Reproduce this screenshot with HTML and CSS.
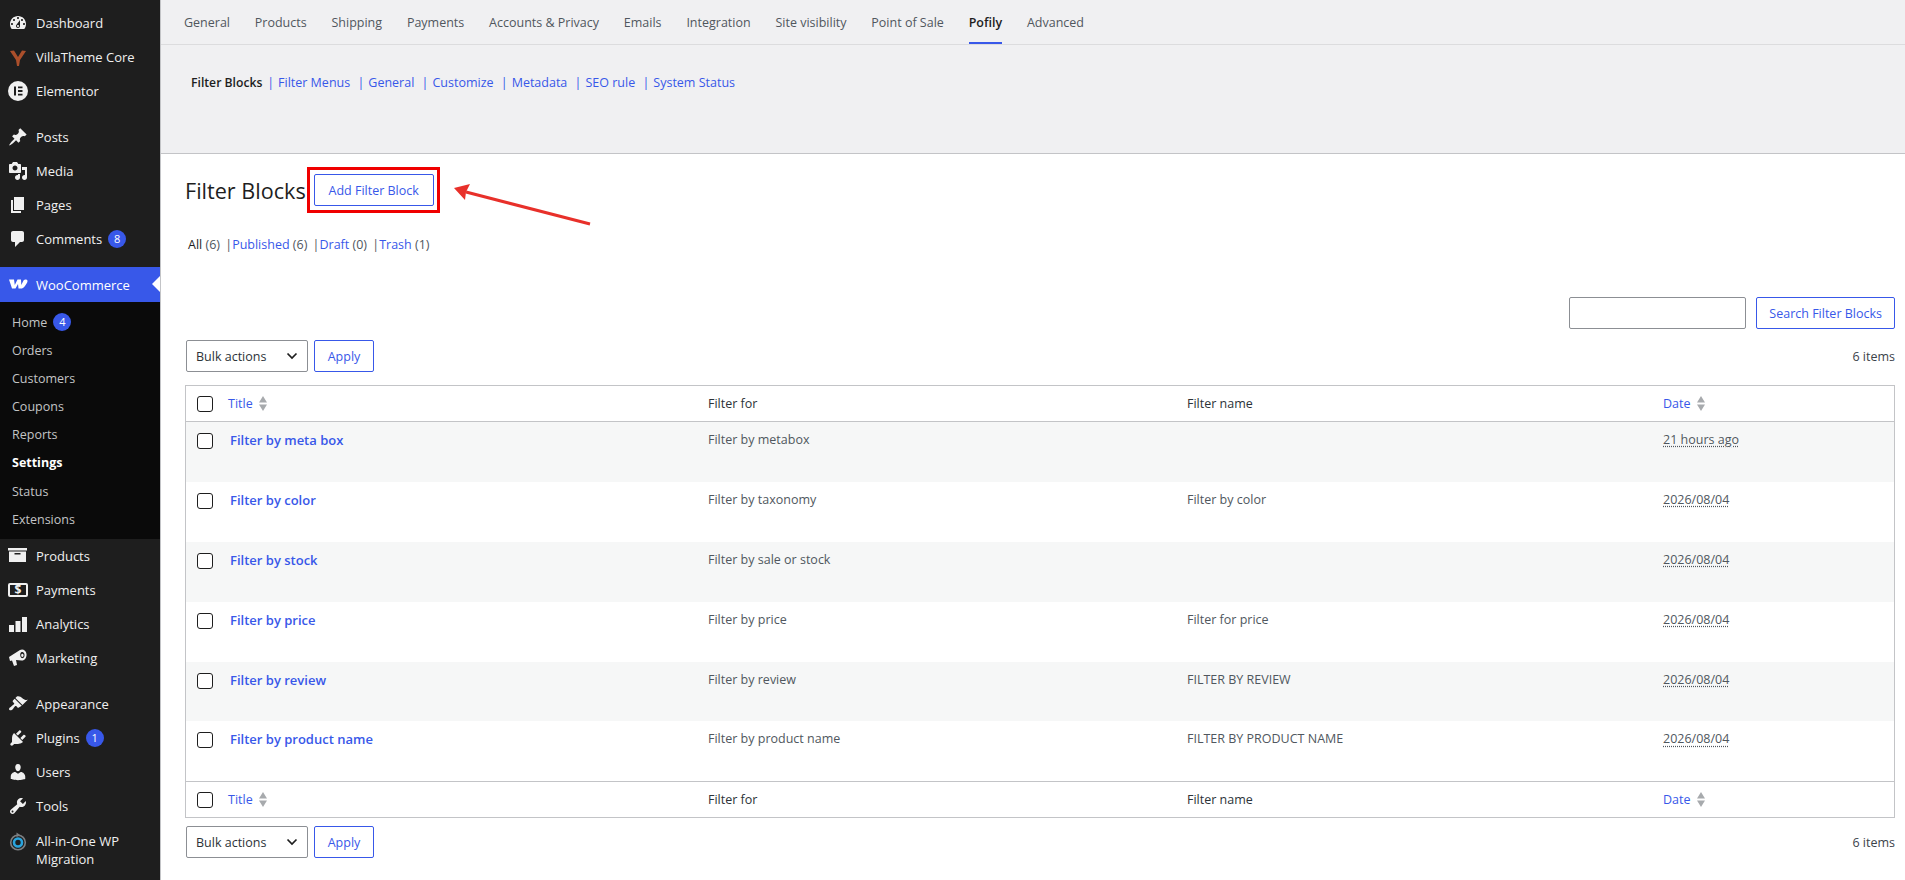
FILE: index.html
```html
<!DOCTYPE html>
<html lang="en">
<head>
    <meta charset="UTF-8">
    <title>Filter Blocks</title>
    <link rel="stylesheet" href="styles.css">
</head>
<body>
    <div class="page">
        <nav class="sidebar">
            <ul class="menu">
                <li class="menu-item"><svg class="menu-icon" viewBox="0 0 20 20"><path fill-rule="evenodd" d="M3.76 16h12.48c1.1-1.37 1.76-3.11 1.76-5 0-4.42-3.58-8-8-8s-8 3.58-8 8c0 1.89.66 3.63 1.76 5zM10 4c.55 0 1 .45 1 1s-.45 1-1 1-1-.45-1-1 .45-1 1-1zM6 6c.55 0 1 .45 1 1s-.45 1-1 1-1-.45-1-1 .45-1 1-1zm8 0c.55 0 1 .45 1 1s-.45 1-1 1-1-.45-1-1 .45-1 1-1zm-5.37 5.55L12 7v6c0 1.1-.9 2-2 2s-2-.9-2-2c0-.57.24-1.08.63-1.45zM4 10c.55 0 1 .45 1 1s-.45 1-1 1-1-.45-1-1 .45-1 1-1zm12 0c.55 0 1 .45 1 1s-.45 1-1 1-1-.45-1-1 .45-1 1-1zm-5 3c0-.55-.45-1-1-1s-1 .45-1 1 .45 1 1 1 1-.45 1-1z"/></svg>Dashboard</li>
                <li class="menu-item"><svg class="menu-icon" viewBox="0 0 20 20"><path fill="#ab4f2b" d="M2 4 6 3.500 10 10 14 3.500 18 4 12 13 11 19H9L8 13z"/></svg>VillaTheme Core</li>
                <li class="menu-item"><svg class="menu-icon" viewBox="0 0 20 20"><path fill-rule="evenodd" d="M10 0a10 10 0 1 0 0 20 10 10 0 0 0 0-20zM6 5.500h2v9H6zM10 5.500h4.500v1.800H10zM10 9.100h4.500v1.800H10zM10 12.700h4.500v1.800H10z"/></svg>Elementor</li>
                <li class="menu-sep"></li>
                <li class="menu-item"><svg class="menu-icon" viewBox="0 0 20 20"><path d="M10.44 3.02l1.82-1.82 6.36 6.35-1.83 1.82c-1.05-.68-2.48-.57-3.41.36l-.75.75c-.92.93-1.04 2.35-.35 3.41l-1.83 1.82-2.41-2.41-2.8 2.79c-.42.42-3.38 2.71-3.8 2.29s1.86-3.39 2.28-3.81l2.79-2.79L4.100 9.360l1.830-1.820c1.050.69 2.480.57 3.400-.36l.75-.75c.93-.92 1.050-2.350.36-3.410z"/></svg>Posts</li>
                <li class="menu-item"><svg class="menu-icon" viewBox="0 0 20 20"><path fill-rule="evenodd" d="M13 11V4c0-.55-.45-1-1-1h-1.670L9 1H5L3.670 3H2c-.55 0-1 .45-1 1v7c0 .55.45 1 1 1h10c.55 0 1-.45 1-1zM7 4.500c1.380 0 2.500 1.120 2.500 2.500S8.380 9.500 7 9.500 4.500 8.380 4.500 7 5.620 4.500 7 4.500zM14 6h5v10.500c0 1.380-1.120 2.500-2.500 2.500S14 17.880 14 16.500s1.120-2.500 2.500-2.500c.17 0 .34.02.5.05V9h-3V6zm-4 8.050V13h2v3.500c0 1.380-1.120 2.500-2.500 2.500S7 17.880 7 16.500 8.120 14 9.500 14c.17 0 .34.02.5.05z"/></svg>Media</li>
                <li class="menu-item"><svg class="menu-icon" viewBox="0 0 20 20"><path d="M6 15V2h10v13H6zm-1 1h8v2H3V5h2v11z"/></svg>Pages</li>
                <li class="menu-item"><svg class="menu-icon" viewBox="0 0 20 20"><path d="M5 2h9c1.100 0 2 .9 2 2v7c0 1.100-.9 2-2 2h-2l-5 5v-5H5c-1.100 0-2-.9-2-2V4c0-1.100.9-2 2-2z"/></svg>Comments <span class="badge">8</span></li>
                <li class="menu-sep"></li>
                <li class="menu-item active"><svg class="menu-icon" viewBox="0 0 20 20"><path d="M1 5.500H6L6.800 11 9.500 5.500H13L13.300 11 15.500 6.500C16.500 5 19.500 5 19.500 7 19.500 9 16 14 14 14.500H10.500L10 10 7.500 14.500H4z"/></svg>WooCommerce</li>
                <li class="submenu">
                    <a class="sub-item">Home <span class="badge">4</span></a>
                    <a class="sub-item">Orders</a>
                    <a class="sub-item">Customers</a>
                    <a class="sub-item">Coupons</a>
                    <a class="sub-item">Reports</a>
                    <a class="sub-item current">Settings</a>
                    <a class="sub-item">Status</a>
                    <a class="sub-item">Extensions</a>
                </li>
                <li class="menu-item"><svg class="menu-icon" viewBox="0 0 20 20"><path fill-rule="evenodd" d="M0 2h19v2.500H0zM1 5.500h17V16H1zM6.500 7v1.500h6V7z"/></svg>Products</li>
                <li class="menu-item"><svg class="menu-icon" viewBox="0 0 20 20"><rect x="1" y="4" width="18" height="12" rx="1" fill="none" stroke="#f0f0f0" stroke-width="2"/><text x="10" y="14.300" class="dollar">$</text></svg>Payments</li>
                <li class="menu-item"><svg class="menu-icon" viewBox="0 0 20 20"><path d="M1 11h5v7H1zM7.500 7h5v11h-5zM14 3h5v15h-5z"/></svg>Analytics</li>
                <li class="menu-item"><svg class="menu-icon" viewBox="0 0 20 20"><path fill-rule="evenodd" d="M1 9 12 2C14.500.5 18 2 18.500 6 19 10 16 13 13.500 12.500L8 12 9 17 6 18 4 12.500 2 13zM14 4C12.500 4 12 6 12.300 7.800 12.600 9.500 13.700 10.500 15 10 16.300 9.500 16.800 7.800 16.400 6 16 4.500 15 4 14 4zM14.300 5.700a1.200 1.700 0 1 0 .1 0z"/></svg>Marketing</li>
                <li class="menu-sep"></li>
                <li class="menu-item"><svg class="menu-icon" viewBox="0 0 20 20"><path d="M14.480 11.060L7.410 3.990l1.500-1.500c.5-.56 2.300-.47 3.510.32 1.210.8 1.430 1.280 2.910 2.100 1.180.64 2.450 1.260 4.450.85zm-.71.71L6.700 4.700 4.930 6.470c-.39.39-.39 1.020 0 1.410l1.060 1.060c.39.39.39 1.030 0 1.420-.6.6-1.430 1.110-2.210 1.690-.35.26-.7.53-1.010.84C1.430 13.230.4 14.850 1.450 15.900c1.060 1.050 2.680.02 3.030-.32.31-.31.58-.66.84-1.010.58-.78 1.090-1.610 1.690-2.210.39-.39 1.020-.39 1.410 0l1.060 1.060c.39.39 1.020.39 1.410 0z"/></svg>Appearance</li>
                <li class="menu-item"><svg class="menu-icon" viewBox="0 0 20 20"><path d="M13.110 4.360L9.870 7.600 8 5.730l3.240-3.240c.35-.34 1.050-.2 1.560.32.52.51.66 1.210.31 1.550zm-8 1.770l.91-1.120 9.010 9.010-1.190.84c-.71.71-2.630 1.160-3.820 1.160H6.140L4.900 17.260c-.59.59-1.540.59-2.120 0-.59-.58-.59-1.530 0-2.120l1.240-1.240v-3.880c0-1.130.4-3.190 1.090-3.890zm7.260 3.970l3.240-3.240c.34-.35 1.040-.21 1.550.31.52.51.66 1.210.31 1.550l-3.240 3.250z"/></svg>Plugins <span class="badge">1</span></li>
                <li class="menu-item"><svg class="menu-icon" viewBox="0 0 20 20"><path d="M10 9.250c-2.270 0-2.730-3.440-2.730-3.440C7 4.020 7.820 2 9.970 2c2.160 0 2.980 2.020 2.710 3.810 0 0-.41 3.440-2.680 3.440zm0 2.570L12.720 10c2.390 0 4.520 2.330 4.520 4.530v2.490s-3.650 1.130-7.240 1.130c-3.650 0-7.240-1.130-7.240-1.130v-2.490c0-2.250 1.940-4.480 4.470-4.480z"/></svg>Users</li>
                <li class="menu-item"><svg class="menu-icon" viewBox="0 0 20 20"><path fill-rule="evenodd" d="M16.680 9.770c-1.340 1.340-3.300 1.670-4.950.99l-5.410 6.520c-.99.99-2.590.99-3.580 0s-.99-2.590 0-3.570l6.520-5.420c-.68-1.650-.35-3.610.99-4.950 1.280-1.280 3.120-1.620 4.720-1.060l-2.890 2.890 2.820 2.820 2.860-2.870c.53 1.580.18 3.390-1.080 4.650zM3.810 16.210c.4.39 1.040.39 1.430 0 .4-.4.4-1.040 0-1.430-.39-.4-1.030-.4-1.430 0-.39.39-.39 1.030 0 1.430z"/></svg>Tools</li>
                <li class="menu-item two-line"><svg class="menu-icon" viewBox="0 0 20 20"><circle cx="10" cy="10.500" r="7.300" fill="none" stroke="#7c7f82" stroke-width="1.600"/><circle cx="10" cy="10.500" r="4" fill="none" stroke="#2aa4dd" stroke-width="2.600"/><path d="M8.500 0.500l4 2.700-4 1.800z" fill="#7c7f82"/></svg><span>All-in-One WP Migration</span></li>
            </ul>
        </nav>

        <main class="main">
            <div class="tabs">
                <a class="tab">General</a>
                <a class="tab">Products</a>
                <a class="tab">Shipping</a>
                <a class="tab">Payments</a>
                <a class="tab">Accounts &amp; Privacy</a>
                <a class="tab">Emails</a>
                <a class="tab">Integration</a>
                <a class="tab">Site visibility</a>
                <a class="tab">Point of Sale</a>
                <a class="tab tab-active">Pofily</a>
                <a class="tab">Advanced</a>
            </div>
            <div class="subnav">
                <b class="subnav-current">Filter Blocks</b>
                <span class="pipe">|</span><a class="subnav-link">Filter Menus</a>
                <span class="pipe">|</span><a class="subnav-link">General</a>
                <span class="pipe">|</span><a class="subnav-link">Customize</a>
                <span class="pipe">|</span><a class="subnav-link">Metadata</a>
                <span class="pipe">|</span><a class="subnav-link">SEO rule</a>
                <span class="pipe">|</span><a class="subnav-link">System Status</a>
            </div>

            <div class="content">
                <div class="title-row">
                    <h1>Filter Blocks</h1>
                    <button class="btn btn-add">Add Filter Block</button>
                </div>
                <div class="views">
                    <b>All</b> <span class="count">(6)</span>
                    <span class="view-pipe">|</span><a>Published</a> <span class="count">(6)</span>
                    <span class="view-pipe">|</span><a>Draft</a> <span class="count">(0)</span>
                    <span class="view-pipe">|</span><a>Trash</a> <span class="count">(1)</span>
                </div>
                <div class="search-row">
                    <input type="text" class="search-input">
                    <button class="btn">Search Filter Blocks</button>
                </div>
                <div class="nav-row">
                    <div class="bulk">
                        <div class="select">Bulk actions <svg width="12" height="8" viewBox="0 0 12 8"><path d="M1.500 1.500 6 6l4.500-4.500" fill="none" stroke="#1e1e1e" stroke-width="1.700"/></svg></div>
                        <button class="btn btn-apply">Apply</button>
                    </div>
                    <span class="items">6 items</span>
                </div>

                <table class="list">
                    <colgroup>
                        <col class="col-check"><col class="col-title"><col class="col-for"><col class="col-name"><col>
                    </colgroup>
                    <thead>
                        <tr>
                            <th><span class="check"></span></th>
                            <th class="th-link">Title <svg class="sort" viewBox="0 0 8 15"><path d="M4 0l4 6.500H0zM4 15 0 8.500h8z"/></svg></th>
                            <th>Filter for</th>
                            <th>Filter name</th>
                            <th class="th-link">Date <svg class="sort" viewBox="0 0 8 15"><path d="M4 0l4 6.500H0zM4 15 0 8.500h8z"/></svg></th>
                        </tr>
                    </thead>
                    <tbody>
                        <tr>
                            <td><span class="check"></span></td>
                            <td><a class="row-title">Filter by meta box</a></td>
                            <td>Filter by metabox</td>
                            <td></td>
                            <td><abbr>21 hours ago</abbr></td>
                        </tr>
                        <tr>
                            <td><span class="check"></span></td>
                            <td><a class="row-title">Filter by color</a></td>
                            <td>Filter by taxonomy</td>
                            <td>Filter by color</td>
                            <td><abbr>2026/08/04</abbr></td>
                        </tr>
                        <tr>
                            <td><span class="check"></span></td>
                            <td><a class="row-title">Filter by stock</a></td>
                            <td>Filter by sale or stock</td>
                            <td></td>
                            <td><abbr>2026/08/04</abbr></td>
                        </tr>
                        <tr>
                            <td><span class="check"></span></td>
                            <td><a class="row-title">Filter by price</a></td>
                            <td>Filter by price</td>
                            <td>Filter for price</td>
                            <td><abbr>2026/08/04</abbr></td>
                        </tr>
                        <tr>
                            <td><span class="check"></span></td>
                            <td><a class="row-title">Filter by review</a></td>
                            <td>Filter by review</td>
                            <td>FILTER BY REVIEW</td>
                            <td><abbr>2026/08/04</abbr></td>
                        </tr>
                        <tr>
                            <td><span class="check"></span></td>
                            <td><a class="row-title">Filter by product name</a></td>
                            <td>Filter by product name</td>
                            <td>FILTER BY PRODUCT NAME</td>
                            <td><abbr>2026/08/04</abbr></td>
                        </tr>
                    </tbody>
                    <tfoot>
                        <tr>
                            <th><span class="check"></span></th>
                            <th class="th-link">Title <svg class="sort" viewBox="0 0 8 15"><path d="M4 0l4 6.500H0zM4 15 0 8.500h8z"/></svg></th>
                            <th>Filter for</th>
                            <th>Filter name</th>
                            <th class="th-link">Date <svg class="sort" viewBox="0 0 8 15"><path d="M4 0l4 6.500H0zM4 15 0 8.500h8z"/></svg></th>
                        </tr>
                    </tfoot>
                </table>

                <div class="nav-row nav-bottom">
                    <div class="bulk">
                        <div class="select">Bulk actions <svg width="12" height="8" viewBox="0 0 12 8"><path d="M1.500 1.500 6 6l4.500-4.500" fill="none" stroke="#1e1e1e" stroke-width="1.700"/></svg></div>
                        <button class="btn btn-apply">Apply</button>
                    </div>
                    <span class="items">6 items</span>
                </div>
            </div>
        </main>
    </div>

    <!-- red annotation drawn over the screenshot -->
    <div class="mark-box"></div>
    <svg class="mark-arrow" width="150" height="50" viewBox="0 0 150 50"><path d="M13 12 137 44" stroke="#e8302a" stroke-width="3" fill="none"/><path d="M1 8 17 4 13 12 12 20z" fill="#e8302a"/></svg>
</body>
</html>
```

FILE: styles.css
```css
* {
    box-sizing: border-box;
}
html, body {
    margin: 0;
    height: 880px;
    overflow: hidden;
}
body {
    position: relative;
    font-family: "Open Sans", "Noto Sans", sans-serif;
    font-size: 13px;
    color: #3c434a;
    background-color: #fff;
}
a {
    color: #3858e9;
}
.page {
    display: flex;
    height: 880px;
}

/* sidebar */
.sidebar {
    width: 160px;
    flex-shrink: 0;
    background-color: #1e1e1e;
    padding-top: 6px;
}
.menu {
    list-style: none;
    margin: 0;
    padding: 0;
}
.menu-item {
    position: relative;
    display: flex;
    align-items: center;
    height: 34px;
    padding-left: 36px;
    color: #f0f0f0;
    font-size: 13px;
    white-space: nowrap;
}
.menu-icon {
    position: absolute;
    left: 8px;
    top: 7px;
    width: 20px;
    height: 20px;
    fill: #f0f0f0;
}
.dollar {
    font-size: 12px;
    font-weight: 700;
    text-anchor: middle;
    fill: #f0f0f0;
}
.menu-sep {
    height: 12px;
}
.menu-item.active {
    height: 35px;
    background-color: #3858e9;
    color: #fff;
    margin-top: -1px;
}
.menu-item.active .menu-icon {
    fill: #fff;
}
.menu-item.active::after {
    content: "";
    position: absolute;
    right: 0;
    top: 9px;
    border: 8px solid transparent;
    border-right-color: #fff;
    border-left-width: 0;
}
.menu-item.two-line {
    height: 54px;
    white-space: normal;
    line-height: 18px;
}
.menu-item.two-line .menu-icon {
    top: 9px;
}
.badge {
    display: inline-block;
    width: 18px;
    height: 18px;
    margin-left: 6px;
    border-radius: 50%;
    background-color: #3858e9;
    color: #fff;
    font-size: 11px;
    line-height: 18px;
    text-align: center;
}
.submenu {
    display: flex;
    flex-direction: column;
    background-color: #0a0a0a;
    padding: 6px 0 5px;
}
.sub-item {
    display: flex;
    align-items: center;
    height: 28.100px;
    padding-left: 12px;
    color: #c3c4c5;
    font-size: 12.500px;
}
.sub-item.current {
    margin-bottom: 1px;
    color: #fff;
    font-weight: 700;
}

/* settings tabs */
.main {
    flex: 1;
    min-width: 0;
    border-left: 1px solid #c3c4c7;
}
.tabs {
    display: flex;
    gap: 24.800px;
    height: 45px;
    padding-left: 23px;
    background-color: #f0f0f2;
    border-bottom: 1px solid #dcdcde;
}
.tab {
    height: 44px;
    line-height: 46px;
    color: #50575e;
    font-weight: 500;
    font-size: 12.500px;
}
.tab-active {
    color: #1e1e1e;
    font-weight: 600;
    border-bottom: 2px solid #3858e9;
}
.subnav {
    height: 109px;
    padding: 29px 0 0 30px;
    background-color: #f0f0f2;
    border-bottom: 1px solid #c3c4c7;
    font-size: 12.500px;
    line-height: 18px;
}
.subnav-current {
    margin-right: -2.500px;
    color: #1e1e1e;
    font-size: 12.200px;
    font-weight: 600;
}
.pipe {
    color: #3858e9;
    margin: 0 4px;
}

/* list page */
.content {
    padding: 0 10px 0 24px;
}
.title-row {
    display: flex;
    align-items: center;
    height: 52px;
    padding-top: 20px;
}
h1 {
    margin: 0 8px 0 0;
    font-size: 21.600px;
    font-weight: 400;
    color: #1e1e1e;
}
.btn {
    height: 32px;
    padding: 0 12px;
    border: 1px solid #3858e9;
    border-radius: 2px;
    background-color: #fff;
    color: #3858e9;
    font-family: inherit;
    font-size: 12.500px;
    font-weight: 500;
}
.btn-add {
    width: 120px;
    padding: 0;
}
.btn-apply {
    width: 60px;
    padding: 0;
}
.views {
    height: 18px;
    margin-top: 30px;
    padding-left: 3px;
    font-size: 12.500px;
    line-height: 18px;
    color: #50575e;
}
.views b {
    color: #1e1e1e;
    font-weight: 500;
}
.view-pipe {
    margin-left: 2px;
}
.search-row {
    display: flex;
    justify-content: flex-end;
    gap: 10px;
    margin-top: 43px;
}
.search-input {
    width: 177px;
    height: 32px;
    border: 1px solid #8c8f94;
    border-radius: 2px;
}
.nav-row {
    display: flex;
    justify-content: space-between;
    align-items: center;
    height: 32px;
    margin-top: 11px;
    padding-left: 1px;
}
.bulk {
    display: flex;
    gap: 6px;
}
.select {
    display: flex;
    justify-content: space-between;
    align-items: center;
    width: 122px;
    height: 32px;
    padding: 0 9px;
    border: 1px solid #8c8f94;
    border-radius: 2px;
    color: #2c3338;
    font-size: 12.500px;
}
.items {
    font-size: 12.500px;
}
.list {
    width: 100%;
    margin-top: 13px;
    table-layout: fixed;
    border-collapse: separate;
    border-spacing: 0;
    border: 1px solid #c3c4c7;
    font-size: 12.500px;
}
.col-check {
    width: 36px;
}
.col-title {
    width: 480px;
}
.col-for {
    width: 479px;
}
.col-name {
    width: 476px;
}
.list th {
    height: 36px;
    padding: 0 0 0 6px;
    text-align: left;
    font-weight: 400;
    color: #2c3338;
}
.list thead th {
    border-bottom: 1px solid #c3c4c7;
}
.list tfoot th {
    border-top: 1px solid #c3c4c7;
}
.list .th-link {
    color: #3858e9;
}
.sort {
    width: 8px;
    height: 15px;
    margin-left: 3px;
    vertical-align: -3px;
    fill: #a7aaad;
}
.list td {
    height: 59.900px;
    padding: 9px 0 0 6px;
    vertical-align: top;
    line-height: 18px;
    color: #50575e;
}
.list tbody tr:nth-child(odd) td {
    background-color: #f6f7f7;
}
.list th:first-child,
.list td:first-child {
    padding-left: 11px;
}
.list td:first-child {
    padding-top: 11px;
}
.check {
    display: block;
    width: 16px;
    height: 16px;
    border: 1px solid #1e1e1e;
    border-radius: 3px;
    background-color: #fff;
}
.row-title {
    margin-left: 2px;
    font-size: 13px;
    font-weight: 600;
    color: #3858e9;
}
abbr {
    text-decoration: underline dotted #50575e;
    text-underline-offset: 2px;
}
.nav-bottom {
    margin-top: 8px;
}

/* annotation */
.mark-box {
    position: absolute;
    left: 307px;
    top: 167px;
    width: 133px;
    height: 46px;
    border: 3px solid #f00000;
}
.mark-arrow {
    position: absolute;
    left: 453px;
    top: 180px;
}
```
